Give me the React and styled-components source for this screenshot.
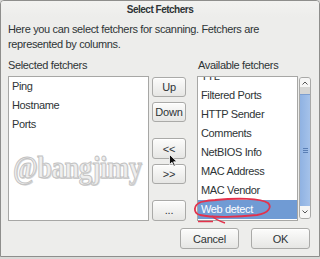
import React from 'react'
import styled, { createGlobalStyle } from 'styled-components'

const GlobalStyle = createGlobalStyle`
  html, body {
    margin: 0;
    padding: 0;
    background: #d9d9d7;
  }
  * {
    box-sizing: border-box;
  }
`

const Window = styled.div`
  position: relative;
  width: 320px;
  height: 257px;
  background: #ededeb;
  border: 1px solid #8e8e8c;
  border-radius: 4px 4px 0 0;
  font-family: "Liberation Sans", Arial, sans-serif;
  font-size: 11px;
  letter-spacing: -0.35px;
  color: #2e3436;
  display: flex;
  flex-direction: column;
  overflow: hidden;
`

const TitleBar = styled.div`
  height: 16px;
  display: flex;
  align-items: center;
  justify-content: center;
  font-size: 10px;
  font-weight: bold;
  letter-spacing: -0.5px;
  background: linear-gradient(#f2f2f0, #ededeb);
`

const Body = styled.div`
  flex: 1;
  display: flex;
  flex-direction: column;
  padding: 5px 0 0 7px;
`

const Intro = styled.p`
  margin: 0;
  line-height: 15px;
  width: 300px;
`

const Columns = styled.div`
  display: grid;
  grid-template-columns: 141px 48px 114px;
  grid-template-rows: 18px 145px;
  margin-top: 6px;
`

const Label = styled.div`
  line-height: 14px;
  padding-left: ${({ $indent }) => $indent || 0}px;
  grid-column: ${({ $col }) => $col};
`

const ListBox = styled.div`
  position: relative;
  background: #fff;
  border: 1px solid #a7a7a5;
  overflow: ${({ $clip }) => ($clip ? 'hidden' : 'visible')};
`

const Rows = styled.div`
  margin-top: ${({ $scroll }) => -($scroll || 0)}px;
`

const Row = styled.div`
  height: 19px;
  line-height: 19px;
  padding-left: 3px;
  white-space: nowrap;
  background: ${({ $selected }) => ($selected ? '#709bd4' : 'transparent')};
  color: ${({ $selected }) => ($selected ? '#fff' : 'inherit')};
`

const ButtonStack = styled.div`
  display: flex;
  flex-direction: column;
  align-items: flex-start;
  padding: 1px 0 0 3px;
`

const Button = styled.button`
  height: ${({ $h }) => $h || 21}px;
  width: ${({ $w }) => $w || 34}px;
  margin-top: ${({ $top }) => $top || 0}px;
  padding: 0;
  font-family: inherit;
  font-size: 11px;
  letter-spacing: -0.2px;
  color: #2e3436;
  background: linear-gradient(#fcfcfb, #e6e6e4);
  border: 1px solid #aaaaa8;
  border-radius: 3px;
  box-shadow: inset 0 1px 0 #ffffff;
`

const RightArea = styled.div`
  display: flex;
  gap: 1px;
`

const RightList = styled(ListBox)`
  width: 101px;
`

const Scrollbar = styled.div`
  width: 12px;
  margin: 1px 0 2px;
  border: 1px solid #a9a9a7;
  border-radius: 3px;
  background: #dcdcda;
  display: flex;
  flex-direction: column;
  overflow: hidden;
`

const ScrollArrow = styled.div`
  height: ${({ $h }) => $h}px;
  background: #f6f6f5;
  display: flex;
  align-items: center;
  justify-content: center;
`

const Track = styled.div`
  height: 7px;
  background: #d6d6d4;
`

const Thumb = styled.div`
  flex: 1;
  background: linear-gradient(90deg, #8fb2e2, #a5c2ea);
  border-top: 1px solid #7d9fd0;
  display: flex;
  align-items: center;
  justify-content: center;
`

const Footer = styled.div`
  display: flex;
  justify-content: flex-end;
  gap: 12px;
  padding: 7px 9px 0 0;
`

const Watermark = styled.div`
  position: absolute;
  left: 4px;
  top: 74px;
  font-family: "Liberation Serif", "Times New Roman", serif;
  font-weight: bold;
  font-size: 26.5px;
  line-height: 1;
  letter-spacing: -0.4px;
  transform: scaleY(1.22);
  transform-origin: top left;
  color: #eeeeee;
  -webkit-text-stroke: 0.8px #c2c2c2;
  text-shadow: 1px 1px 0 #d8d8d8;
  pointer-events: none;
`

const Overlay = styled.svg`
  position: absolute;
  left: ${({ $x }) => $x}px;
  top: ${({ $y }) => $y}px;
  overflow: visible;
  pointer-events: none;
`

const Chevron = ({ up }) => (
  <svg width="6" height="4" viewBox="0 0 6 4">
    <path d={up ? 'M0.5 3.5 L3 1 L5.5 3.5' : 'M0.5 0.5 L3 3 L5.5 0.5'} fill="none" stroke="#555" strokeWidth="1" />
  </svg>
)

const Grip = () => (
  <svg width="5" height="5" viewBox="0 0 5 5">
    <path d="M0 0.5 H5 M0 2.5 H5 M0 4.5 H5" stroke="#5a7fb5" strokeWidth="1" />
  </svg>
)

const selected = ['Ping', 'Hostname', 'Ports']
const available = ['TTL', 'Filtered Ports', 'HTTP Sender', 'Comments', 'NetBIOS Info', 'MAC Address', 'MAC Vendor', 'Web detect']

export default function App() {
  return (
    <>
      <GlobalStyle />
      <Window>
        <TitleBar>Select Fetchers</TitleBar>
        <Body>
          <Intro>Here you can select fetchers for scanning. Fetchers are represented by columns.</Intro>
          <Columns>
            <Label $col="1 / 3">Selected fetchers</Label>
            <Label $col="3" $indent={1}>Available fetchers</Label>
            <ListBox>
              <Rows>
                {selected.map(name => <Row key={name}>{name}</Row>)}
              </Rows>
              <Watermark>@bangjimy</Watermark>
            </ListBox>
            <ButtonStack>
              <Button>Up</Button>
              <Button $top={5}>Down</Button>
              <Button $top={16}>&lt;&lt;</Button>
              <Button $top={5}>&gt;&gt;</Button>
              <Button $top={16} $h={22}>...</Button>
            </ButtonStack>
            <RightArea>
              <RightList $clip>
                <Rows $scroll={10}>
                  {available.map(name => (
                    <Row key={name} $selected={name === 'Web detect'}>{name}</Row>
                  ))}
                </Rows>
              </RightList>
              <Scrollbar>
                <ScrollArrow $h={9}><Chevron up /></ScrollArrow>
                <Track />
                <Thumb><Grip /></Thumb>
                <ScrollArrow $h={12}><Chevron /></ScrollArrow>
              </Scrollbar>
            </RightArea>
          </Columns>
          <Footer>
            <Button $w={59}>Cancel</Button>
            <Button $w={59}>OK</Button>
          </Footer>
        </Body>

        {/* mouse pointer over the << button */}
        <Overlay $x={168} $y={153} width="9" height="13" viewBox="0 0 9 13">
          <path d="M0.5 0.5 L0.5 10.5 L3 8.3 L4.8 12.3 L6.3 11.6 L4.6 7.8 L8 7.8 Z" fill="#111" stroke="#fff" strokeWidth="0.8" />
        </Overlay>

        {/* red annotation around Web detect */}
        <Overlay $x={190} $y={195} width="82" height="30" viewBox="0 0 82 30">
          <path
            d="M24 4 C45 2 70 2 77 7 C81 11 78 17 66 19 C48 21 22 22 9 19 C2 17 2 9 10 6 C14 5 19 4 26 4"
            fill="none"
            stroke="#e3324c"
            strokeWidth="1.8"
          />
          <path d="M21 20 C24 23 28 25 34 27" fill="none" stroke="#e3324c" strokeWidth="1.5" />
          <path d="M7 25.5 H22" fill="none" stroke="#e3324c" strokeWidth="1.3" />
        </Overlay>
      </Window>
    </>
  )
}
